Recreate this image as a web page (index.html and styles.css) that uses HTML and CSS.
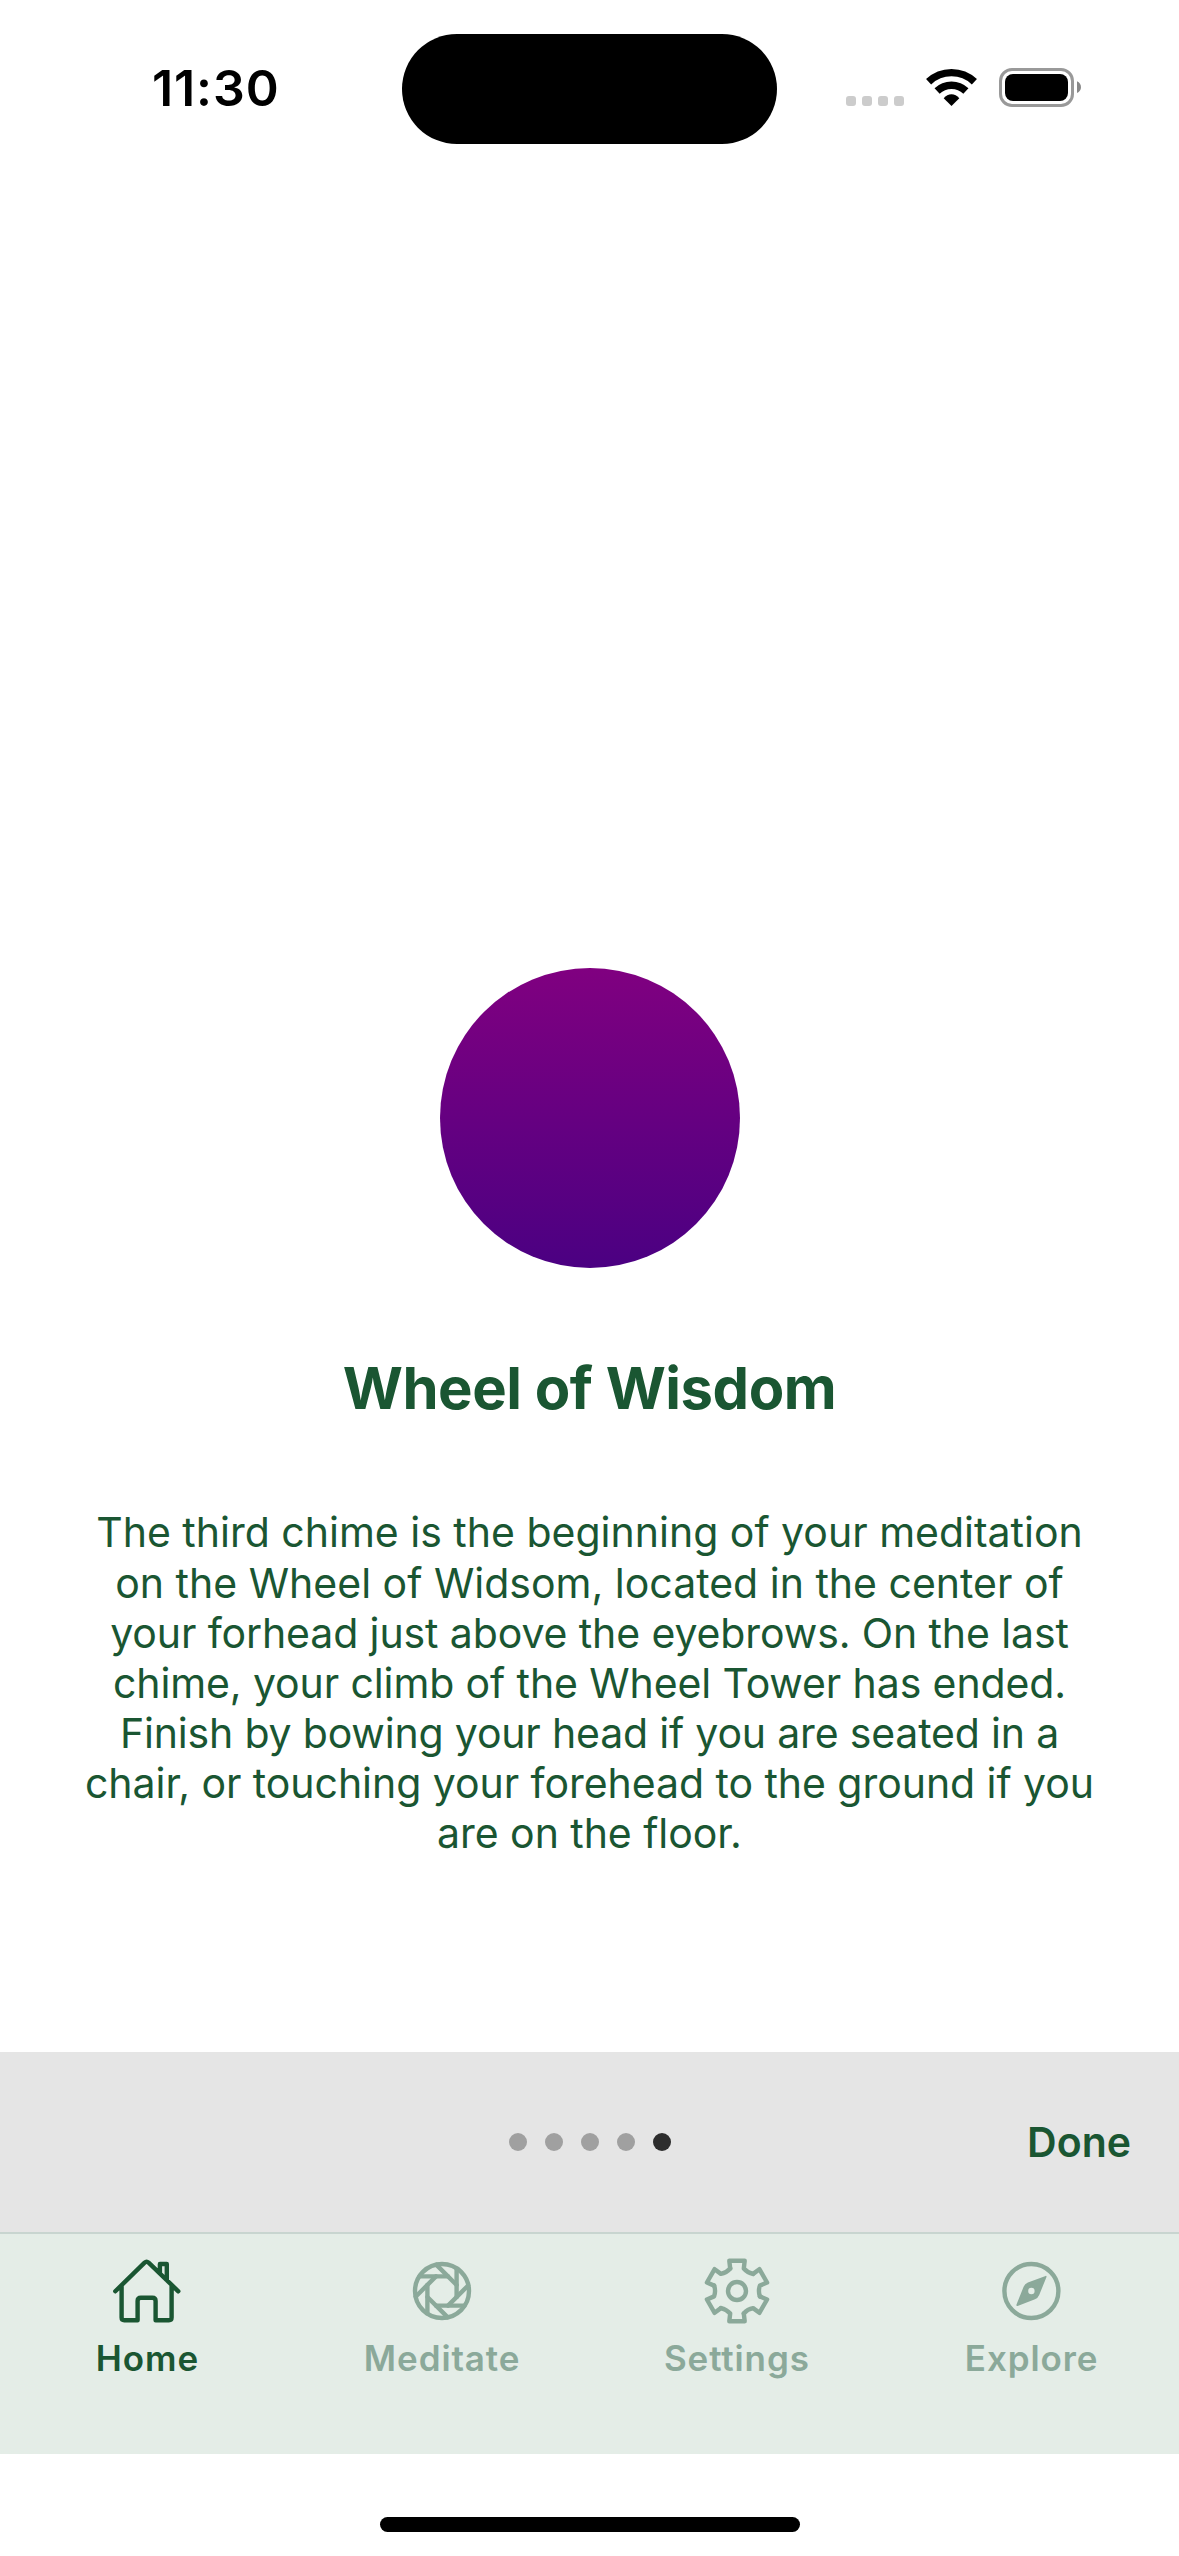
FILE: index.html
```html
<!DOCTYPE html>
<html lang="en">
<head>
<meta charset="utf-8">
<title>Wheel of Wisdom</title>
<link rel="stylesheet" href="styles.css">
</head>
<body>
<div class="screen">
  <header class="status-bar">
    <div class="time">11:30</div>
    <div class="island"></div>
    <svg class="status-icons" viewBox="0 0 240 39" width="240" height="39">
      <g fill="#ccc">
        <rect x="0" y="28" width="10" height="10" rx="3"/>
        <rect x="16" y="28" width="10" height="10" rx="3"/>
        <rect x="32" y="28" width="10" height="10" rx="3"/>
        <rect x="48" y="28" width="10" height="10" rx="3"/>
      </g>
      <g transform="translate(105.5 38)">
        <path d="M-22.9 -24.3A33.4 33.4 0 0 1 22.9 -24.3M-14.4 -15A20.8 20.8 0 0 1 14.4 -15" fill="none" stroke="#000" stroke-width="7.4"/>
        <path d="M0 0L-7.8 -7.8C-3.6 -13 3.6 -13 7.8 -7.8Z"/>
      </g>
      <rect x="154.5" y="1.5" width="72" height="36" rx="11.5" fill="none" stroke="#999" stroke-width="3"/>
      <rect x="159" y="6" width="63" height="27" rx="8"/>
      <path d="M231 13.3C236.3 15.3 236.3 23 231 25Z" fill="#888"/>
    </svg>
  </header>

  <main class="content">
    <div class="wheel"></div>
    <h1 class="title">Wheel of Wisdom</h1>
    <p class="description">
      <span>The third chime is the beginning of your meditation</span>
      <span>on the Wheel of Widsom, located in the center of</span>
      <span class="tight">your forhead just above the eyebrows. On the last</span>
      <span class="tight">chime, your climb of the Wheel Tower has ended.</span>
      <span class="tighter">Finish by bowing your head if you are seated in a</span>
      <span class="snug">chair, or touching your forehead to the ground if you</span>
      <span class="snug">are on the floor.</span>
    </p>
  </main>

  <div class="pager">
    <div class="dots"><i></i><i></i><i></i><i></i><i class="active"></i></div>
    <span class="done">Done</span>
  </div>

  <nav class="tabs">
    <a class="tab active">
      <svg viewBox="0 0 72 72" width="72" height="72">
        <path d="M4.3 36.3L33.6 7.6Q35.6 5.8 37.6 7.6L67.3 36.3M10.6 31V62.6Q10.6 65.3 13.3 65.3H26.6V46Q26.6 42.7 29.9 42.7H41.3Q44.6 42.7 44.6 46V65.3H57.9Q60.6 65.3 60.6 62.6V31M48.9 17V9H55.8V25"/>
      </svg>
      <span>Home</span>
    </a>
    <a class="tab">
      <svg viewBox="-36 -36 72 72" width="72" height="72">
        <defs><path id="blade" d="M6.05 -14.6H-22.4"/></defs>
        <circle r="27"/>
        <use href="#blade"/><use href="#blade" transform="rotate(45)"/><use href="#blade" transform="rotate(90)"/><use href="#blade" transform="rotate(135)"/>
        <use href="#blade" transform="rotate(180)"/><use href="#blade" transform="rotate(225)"/><use href="#blade" transform="rotate(270)"/><use href="#blade" transform="rotate(315)"/>
      </svg>
      <span>Meditate</span>
    </a>
    <a class="tab">
      <svg viewBox="-36 -36 72 72" width="72" height="72">
        <defs><path id="tooth" d="M-6.8 -22.5L-7.7 -30.3H7.7L6.8 -22.5Q10.5 -18.2 16.1 -17.1"/></defs>
        <circle r="9"/>
        <use href="#tooth"/><use href="#tooth" transform="rotate(60)"/><use href="#tooth" transform="rotate(120)"/>
        <use href="#tooth" transform="rotate(180)"/><use href="#tooth" transform="rotate(240)"/><use href="#tooth" transform="rotate(300)"/>
      </svg>
      <span>Settings</span>
    </a>
    <a class="tab">
      <svg viewBox="-35.4 -36 72 72" width="72" height="72">
        <circle r="27"/>
        <path class="solid" fill-rule="evenodd" d="M14.2 -15.1L-3.5 -8.4Q-6.6 -7.2 -7.8 -4.2L-14.9 13.6Q-15.4 15.3 -13.8 14.9L3.6 8.2Q6.6 7 7.8 4L15 -13.8Q15.5 -15.4 14.2 -15.1ZM3.2 0A3.2 3.2 0 1 1 -3.2 0A3.2 3.2 0 1 1 3.2 0Z"/>
      </svg>
      <span>Explore</span>
    </a>
  </nav>

  <footer class="home-area"><div class="home-indicator"></div></footer>
</div>
</body>
</html>
```
FILE: styles.css
```css
* { box-sizing: border-box; }

body {
  margin: 0;
  background: #fff;
  color: #1a5632;
  font-family: Inter, "Liberation Sans", sans-serif;
}

.screen {
  display: flex;
  flex-direction: column;
  width: 1179px;
  height: 2556px;
  overflow: hidden;
}

.status-bar {
  display: grid;
  grid-template-columns: 402px 375px 402px;
  align-items: start;
  height: 178px;
  color: #000;
}

.time {
  margin-top: 58px;
  padding-left: 152px;
  font-size: 50px;
  font-weight: 600;
  letter-spacing: 0.9px;
  line-height: 60px;
  white-space: nowrap;
}

.island {
  height: 110px;
  margin-top: 34px;
  border-radius: 55px;
  background: #000;
}

.status-icons {
  margin: 68px 0 0 69px;
}

.content {
  display: flex;
  flex-direction: column;
  align-items: center;
  height: 1874px;
  padding-top: 790px;
}

.wheel {
  width: 300px;
  height: 300px;
  border-radius: 50%;
  background: linear-gradient(#800080, #4b0082);
}

.title {
  margin: 85px 0 0;
  font-size: 58px;
  font-weight: 700;
  letter-spacing: -0.48px;
  line-height: 70px;
  white-space: nowrap;
}

.description {
  display: flex;
  flex-direction: column;
  align-items: center;
  margin: 84.4px 0 0;
  font-size: 41px;
  line-height: 50.15px;
  white-space: nowrap;
}

.snug { letter-spacing: -0.05px; }
.tight { letter-spacing: -0.11px; }
.tighter { letter-spacing: -0.18px; }

.pager {
  display: grid;
  grid-template-columns: 1fr auto 1fr;
  align-items: center;
  height: 180px;
  padding-right: 48px;
  padding-left: 48px;
  background: #e5e5e5;
}

.dots {
  display: flex;
  grid-column: 2;
  gap: 18px;
}

.dots i {
  width: 18px;
  height: 18px;
  border-radius: 50%;
  background: #a0a0a0;
}

.dots .active { background: #2d2d2d; }

.done {
  justify-self: end;
  font-size: 41px;
  font-weight: 600;
  line-height: 50px;
}

.tabs {
  display: grid;
  grid-template-columns: repeat(4, 1fr);
  height: 222px;
  border-top: 2px solid #c8d5d0;
  background: #e4ede7;
}

.tab {
  display: flex;
  flex-direction: column;
  align-items: center;
  padding-top: 21px;
  color: #8ba99a;
  font-size: 35px;
  font-weight: 600;
  letter-spacing: 0.9px;
  line-height: 42px;
}

.tab.active { color: #1a5632; }

.tab svg {
  fill: none;
  stroke: currentColor;
  stroke-width: 4.4;
  stroke-linecap: round;
  stroke-linejoin: round;
}

.tab .solid {
  fill: currentColor;
  stroke: none;
}

.tab span { margin-top: 10px; }

.home-area {
  display: flex;
  justify-content: center;
  height: 102px;
  padding-top: 63px;
}

.home-indicator {
  width: 420px;
  height: 15px;
  border-radius: 8px;
  background: #000;
}
```
